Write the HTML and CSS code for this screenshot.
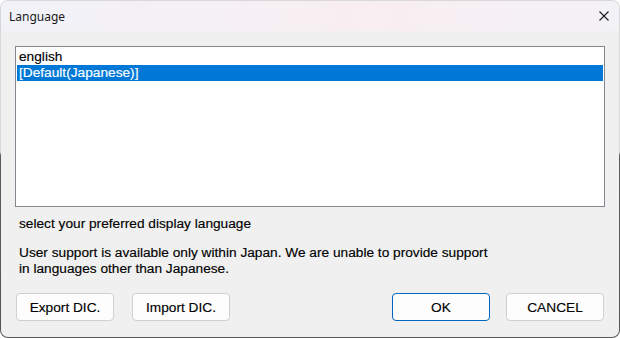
FILE: index.html
```html
<!DOCTYPE html>
<html>
<head>
<meta charset="utf-8">
<link rel="stylesheet" href="styles.css">
</head>
<body>
<div class="window">
  <div class="frame">
    <header class="titlebar">
      <span class="title">Language</span>
      <svg class="close" width="10" height="10" viewBox="0 0 10 10"><path d="M0.5 0.5 L9.5 9.5 M9.5 0.5 L0.5 9.5" stroke="#1b1b1b" stroke-width="1.1" fill="none"/></svg>
    </header>
    <main class="content">
      <div class="listbox">
        <div class="item">english</div>
        <div class="item selected">[Default(Japanese)]</div>
      </div>
      <p class="hint">select your preferred display language</p>
      <p class="notice">User support is available only within Japan. We are unable to provide support<br>in languages other than Japanese.</p>
      <div class="buttons">
        <div class="group group-left">
          <button class="btn">Export DIC.</button>
          <button class="btn">Import DIC.</button>
        </div>
        <div class="group group-right">
          <button class="btn primary">OK</button>
          <button class="btn">CANCEL</button>
        </div>
      </div>
    </main>
  </div>
</div>
</body>
</html>
```

FILE: styles.css
```css
html, body {
  margin: 0;
  padding: 0;
  background: #ffffff;
}
body {
  width: 620px;
  height: 338px;
  overflow: hidden;
  font-family: "Liberation Sans", Arial, sans-serif;
  font-size: 13.7px;
  color: #000;
}
.window {
  width: 620px;
  height: 338px;
  box-sizing: border-box;
  padding: 1px;
  border-radius: 8px;
  background: linear-gradient(to bottom, #d8d8d8 0%, #d8d8d8 45%, #5c5c5c 46%, #555555 100%);
}
.frame {
  height: 100%;
  border-radius: 7px;
  overflow: hidden;
  background: #f0f0f0;
  display: flex;
  flex-direction: column;
}
.titlebar {
  height: 30px;
  flex: none;
  display: flex;
  align-items: center;
  justify-content: space-between;
  padding: 0 10px 0 8px;
  background: linear-gradient(to right, #f1f2f8 0%, #f6f0f4 40%, #f9eef1 60%, #f3f2f7 100%);
}
.title {
  font-family: "Noto Sans", sans-serif;
  font-size: 12px;
  line-height: 16px;
  color: #1a1a1a;
  margin-top: 1px;
}
.close {
  display: block;
}
.content {
  flex: 1;
  padding: 15px 14px 0 14px;
  display: flex;
  flex-direction: column;
  -webkit-text-stroke: 0.15px currentColor;
}
.listbox {
  height: 161px;
  box-sizing: border-box;
  border: 1px solid #828790;
  background: #ffffff;
  padding: 2px 1px;
}
.item {
  height: 16px;
  line-height: 16px;
  padding-left: 2px;
  white-space: nowrap;
}
.item.selected {
  background: #0078d7;
  color: #ffffff;
}
.hint {
  margin: 9px 0 0 4px;
  line-height: 16px;
}
.notice {
  margin: 13px 0 0 4px;
  line-height: 16px;
}
.buttons {
  margin-top: 16px;
  padding: 0 1px;
  display: flex;
  justify-content: space-between;
}
.group {
  display: flex;
}
.group-left {
  gap: 18px;
}
.group-right {
  gap: 16px;
}
.btn {
  width: 98px;
  height: 28px;
  box-sizing: border-box;
  border: 1px solid #d0d0d0;
  border-radius: 4px;
  background: #fdfdfd;
  font-family: "Liberation Sans", Arial, sans-serif;
  font-size: 13.7px;
  color: #000;
  padding: 0;
  -webkit-text-stroke: 0.15px currentColor;
}
.btn.primary {
  border-color: #0067c0;
}
```
